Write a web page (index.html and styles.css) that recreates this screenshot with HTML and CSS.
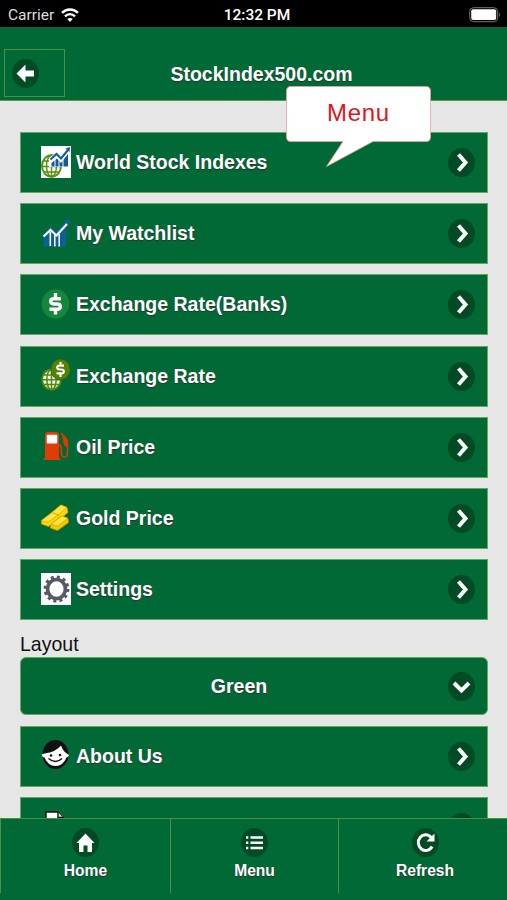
FILE: index.html
```html
<!DOCTYPE html>
<html lang="en">
<head>
    <meta charset="UTF-8">
    <meta name="viewport" content="width=device-width, initial-scale=1.0">
    <title>StockIndex500.com</title>
    <link rel="stylesheet" href="styles.css">
</head>
<body>

    <!-- Shared icons -->
    <svg class="defs" width="0" height="0">
        <symbol id="chevron" viewBox="0 0 27 29">
            <ellipse cx="13.5" cy="14.5" rx="13.5" ry="14.5" fill="#004a24"/>
            <path d="M10.5 6.5l7 8-7 8" fill="none" stroke="#fff" stroke-width="4"/>
        </symbol>
    </svg>

    <div class="status-bar">
        <div class="carrier">
            <span>Carrier</span>
            <svg width="18" height="14" viewBox="0 0 18 14" fill="none" stroke="#fff" stroke-width="2.4">
                <path d="M1 4.9c4.4-4.6 11.6-4.6 16 0"/>
                <path d="M4 8.3c2.8-2.9 7.2-2.9 10 0"/>
                <path d="M9 14L6.3 11.1c1.5-1.4 3.9-1.4 5.4 0z" fill="#fff" stroke="none"/>
            </svg>
        </div>
        <span class="clock">12:32 PM</span>
        <svg class="battery" width="32" height="16" viewBox="0 0 32 16">
            <rect x=".7" y=".7" width="28" height="14" rx="4" fill="none" stroke="#777" stroke-width="1"/>
            <rect x="2.2" y="2.3" width="25" height="10.8" rx="2" fill="#fff"/>
            <path d="M30 5.500q2 2.300 0 4.600z" fill="#777"/>
        </svg>
    </div>

    <header class="header">
        <a href="#" class="back">
            <svg width="27" height="29" viewBox="0 0 27 29">
                <ellipse cx="13.5" cy="14.5" rx="13.5" ry="14.5" fill="#004a24"/>
                <path d="M4.500 14.500L13.500 5.500V11.500H22V17.500H13.500V23.500z" fill="#fff"/>
            </svg>
        </a>
        <h1>StockIndex500.com</h1>
        <div class="callout">
            <svg width="146" height="82" viewBox="0 0 146 82">
                <path d="M5 .5H140Q144.500.5 144.500 5V51Q144.500 55.500 140 55.500H87L40.500 80.500 57 55.500H5Q.5 55.500.5 51V5Q.5.5 5 .5z" fill="#fff" stroke="#f0a0a0" stroke-width=".8"/>
            </svg>
            <span>Menu</span>
        </div>
    </header>

    <main class="content">
        <a href="#" class="item">
            <svg class="icon" viewBox="0 0 30 32">
                <path d="M0 0h30v32H0z" fill="#fff"/>
                <g fill="none" stroke="#56900f">
                    <ellipse cx="10.500" cy="20" rx="9.500" ry="10.700" stroke-width="2"/>
                    <path d="M10.500 9v22M2 15h17M1 20.500h19M3 26h15" stroke-width="1.400"/>
                    <ellipse cx="10.500" cy="20" rx="5" ry="10.700" stroke-width="1.400"/>
                </g>
                <path d="M8 12L16 6l4 4 6-7h3v18H8z" fill="#fff"/>
                <path d="M10.500 17l5.500-4.500 4 4.500 7-9v12.500H10.500z" fill="#10599a"/>
                <path d="M14 13.500v7M18 14v7M22 14v7" stroke="#fff" stroke-width="1"/>
                <path d="M9.500 13.500L15.500 8l4.500 4.500 7-8.500" fill="none" stroke="#10599a" stroke-width="2"/>
                <path d="M24.500 2.500L29 1l-.5 5z" fill="#10599a"/>
            </svg>
            <span class="label">World Stock Indexes</span>
            <svg class="arrow"><use href="#chevron"/></svg>
        </a>
        <a href="#" class="item">
            <svg class="icon" viewBox="0 0 30 32">
                <path d="M2.500 20L9.500 13 15 18 25 8v21.500H2.500z" fill="#0d5f96"/>
                <path d="M4 15L9.500 9.500 15 14.500 24 5l-1.500-1.500L28.500 2v7L26 7 15 18.500z" fill="#0d5f96"/>
                <path d="M2.500 19.500L9.500 13 15.500 18.500 26 7" fill="none" stroke="#fff" stroke-width="2.200"/>
                <path d="M9.300 15v14M13.800 18v11.500M18.200 17v12.500" stroke="#fff" stroke-width="1.500"/>
            </svg>
            <span class="label">My Watchlist</span>
            <svg class="arrow"><use href="#chevron"/></svg>
        </a>
        <a href="#" class="item">
            <svg class="icon" viewBox="0 0 30 32">
                <ellipse cx="14.500" cy="16" rx="13.700" ry="14.700" fill="#15873d"/>
                <path d="M19.800 10.700H13Q9.700 10.700 9.700 13.300T13 16H16Q19.300 16 19.300 18.700T16 21.300H8.500M14.500 5V11M14.500 21V26.500" fill="none" stroke="#fff" stroke-width="3.400"/>
            </svg>
            <span class="label">Exchange Rate(Banks)</span>
            <svg class="arrow"><use href="#chevron"/></svg>
        </a>
        <a href="#" class="item">
            <svg class="icon" viewBox="0 0 30 32">
                <ellipse cx="10.500" cy="20.500" rx="10.300" ry="11" fill="#568713"/>
                <ellipse cx="10.500" cy="20.500" rx="8.500" ry="9.300" fill="#eef6e2"/>
                <g fill="none" stroke="#568713" stroke-width="1.500">
                    <path d="M10.500 10v21M2 16h17M1 20.800h19M2 25.500h17"/>
                    <ellipse cx="10.500" cy="20.500" rx="4.700" ry="10"/>
                </g>
                <ellipse cx="19.500" cy="10.500" rx="9.700" ry="10.500" fill="#568000" stroke="#006936" stroke-width=".6"/>
                <path d="M23 6.700H18.500Q16.200 6.700 16.200 8.600T18.500 10.500H20.500Q22.800 10.500 22.800 12.500T20.500 14.400H15.500M19.500 3V7M19.500 14V18" fill="none" stroke="#fff" stroke-width="2.200"/>
            </svg>
            <span class="label">Exchange Rate</span>
            <svg class="arrow"><use href="#chevron"/></svg>
        </a>
        <a href="#" class="item">
            <svg class="icon" viewBox="0 0 30 32">
                <path d="M4 27V5Q4 2 7 2H15Q18 2 18 5V27L20 30H2L4 27.500z" fill="#e13c05"/>
                <rect x="5.700" y="4.800" width="10.600" height="8.700" rx="1" fill="#fff"/>
                <path d="M17.500 14.500q2.800.5 2.800 4v3q0 5.500 3.200 5.500t3-5.500V13q0-3-2-5.500L20 3" fill="none" stroke="#d63b08" stroke-width="1.600"/>
                <path d="M20.500 4.500L26 10v7.500q-4.500-2.500-4-7.500z" fill="#d63b08"/>
            </svg>
            <span class="label">Oil Price</span>
            <svg class="arrow"><use href="#chevron"/></svg>
        </a>
        <a href="#" class="item">
            <svg class="icon" viewBox="0 0 30 32">
                <g stroke="#d6a100" stroke-width=".7" stroke-linejoin="round">
                    <path d="M9 13L20 4l6 2.500 1 5L16 20l-8-3z" fill="#ffd60a"/>
                    <path d="M9 13L20 4l6 2.500L16 15z" fill="#ffe63d"/>
                    <path d="M.5 19.500L11 11.500l6 2.500.5 4L7.500 25.500.5 23z" fill="#ffd60a"/>
                    <path d="M.5 19.500L11 11.500l6 2.500L7 21.500z" fill="#ffe63d"/>
                    <path d="M10 23L21 15l6 2.500.5 4L16.500 29.500 9.500 27z" fill="#f7c600"/>
                    <path d="M10 23L21 15l6 2.500L16.500 25z" fill="#ffe63d"/>
                </g>
            </svg>
            <span class="label">Gold Price</span>
            <svg class="arrow"><use href="#chevron"/></svg>
        </a>
        <a href="#" class="item">
            <svg class="icon" viewBox="0 0 30 32">
                <path d="M0 0h30v32H0z" fill="#fff"/>
                <ellipse cx="15.500" cy="16" rx="11.300" ry="12" fill="none" stroke="#565966" stroke-width="3.200" stroke-dasharray="3.050 3.050"/>
                <ellipse cx="15.500" cy="16" rx="8.900" ry="9.500" fill="none" stroke="#565966" stroke-width="3.600"/>
            </svg>
            <span class="label">Settings</span>
            <svg class="arrow"><use href="#chevron"/></svg>
        </a>

        <div class="layout-label"><span>Layout</span></div>
        <div class="select">
            <span class="label">Green</span>
            <svg class="arrow" viewBox="0 0 27 29">
                <ellipse cx="13.5" cy="14.5" rx="13.5" ry="14.5" fill="#004a24"/>
                <path d="M6 11l7.500 7.500L21 11" fill="none" stroke="#fff" stroke-width="4"/>
            </svg>
        </div>

        <a href="#" class="item">
            <svg class="icon" viewBox="0 0 30 32">
                <ellipse cx="14.500" cy="15.500" rx="13" ry="14.500" fill="#111"/>
                <path d="M3.500 14.500Q15 13 20 6.500q2 6 6.500 8.500l1.500 1q-.5 2-2.500 2.500Q22 27 14.500 27T3.500 18.500Q1 18 .8 15.500z" fill="#fff"/>
                <path d="M7.500 19.500q7 6 13.500 0" fill="none" stroke="#111" stroke-width="1.400"/>
                <circle cx="10" cy="16.500" r="1.300" fill="#111"/>
                <circle cx="19" cy="16" r="1.300" fill="#111"/>
            </svg>
            <span class="label">About Us</span>
            <svg class="arrow"><use href="#chevron"/></svg>
        </a>
        <a href="#" class="item">
            <svg class="icon" viewBox="0 0 30 32">
                <path d="M5 30V2H17l5 6v22z" fill="#fff" stroke="#111" stroke-width="1.400"/>
                <path d="M17 2v5.500h5" fill="#ddd" stroke="#111" stroke-width="1.400"/>
            </svg>
            <svg class="arrow"><use href="#chevron"/></svg>
        </a>
    </main>

    <nav class="footer">
        <a href="#">
            <svg width="27" height="29" viewBox="0 0 27 29">
                <ellipse cx="13.5" cy="14.5" rx="13.5" ry="14.5" fill="#004a24"/>
                <path d="M13.500 5.500L22.500 15H20V24H15.500V17.500H11.500V24H7V15H4.500z" fill="#fff"/>
            </svg>
            <span>Home</span>
        </a>
        <a href="#">
            <svg width="27" height="29" viewBox="0 0 27 29">
                <ellipse cx="13.5" cy="14.5" rx="13.5" ry="14.5" fill="#004a24"/>
                <path d="M5 9.500h2.300M5 14.800h2.300M5 20h2.300M9.500 9.500H22M9.500 14.800H22M9.500 20H22" stroke="#fff" stroke-width="2.500"/>
            </svg>
            <span>Menu</span>
        </a>
        <a href="#">
            <svg width="27" height="29" viewBox="0 0 27 29">
                <ellipse cx="13.5" cy="14.5" rx="13.5" ry="14.5" fill="#004a24"/>
                <path d="M19.200 9.500A7.300 7.900 0 1 0 20 18.500" fill="none" stroke="#fff" stroke-width="3"/>
                <path d="M22.500 5.500V13.500H14.500z" fill="#fff"/>
            </svg>
            <span>Refresh</span>
        </a>
    </nav>

</body>
</html>
```
FILE: styles.css
```css
body {
    margin: 0;
    height: 900px;
    overflow: hidden;
    display: flex;
    flex-direction: column;
    background-color: #e6e6e6;
    font-family: "Liberation Sans", Arial, sans-serif;
}

a {
    color: #fff;
    text-decoration: none;
}

svg {
    display: block;
}

.defs {
    position: absolute;
}

/* Status bar */
.status-bar {
    flex: none;
    height: 27px;
    display: grid;
    grid-template-columns: 1fr auto 1fr;
    align-items: center;
    padding: 2px 6px 0 13px;
    box-sizing: border-box;
    background: #000;
    color: #fff;
    font-family: Roboto, "Liberation Sans", sans-serif;
    font-size: 15.5px;
}

.carrier {
    display: flex;
    align-items: center;
    gap: 7px;
    margin-left: -5px;
    color: #ddd;
}

.clock {
    font-weight: 500;
}

.battery {
    justify-self: end;
}

/* Header */
.header {
    flex: none;
    position: relative;
    z-index: 1;
    height: 74px;
    box-sizing: border-box;
    padding-top: 22px;
    display: grid;
    grid-template-columns: 69px 1fr 53px;
    background: #006936;
    border-bottom: 1px solid #569a4c;
}

.back {
    width: 61px;
    height: 48px;
    margin-left: 4px;
    padding-left: 7px;
    box-sizing: border-box;
    display: flex;
    align-items: center;
    border: 1px solid #4b9144;
}

.header h1 {
    margin: 0;
    font-size: 19.5px;
    line-height: 50px;
    text-align: center;
    color: #fff;
    text-shadow: 0 1px 1px #303030;
    transform: scaleY(1.06);
}

/* Callout bubble */
.callout {
    position: absolute;
    left: 286px;
    top: 59px;
    width: 146px;
}

.callout span {
    position: absolute;
    top: 0;
    left: 0;
    width: 145px;
    line-height: 54px;
    text-align: center;
    font-size: 24px;
    letter-spacing: .7px;
    color: #e0141c;
}

/* Menu list */
.content {
    flex: 1;
    min-height: 0;
    overflow: hidden;
    padding: 31px 19px 0 20px;
    display: flex;
    flex-direction: column;
    gap: 10.2px;
}

.item {
    flex: none;
    height: 61px;
    box-sizing: border-box;
    padding: 0 12px 0 20px;
    display: flex;
    align-items: center;
    background: #006936;
    border: 1px solid #67a85b;
}

.icon {
    width: 30px;
    height: 32px;
    margin-right: 5px;
    margin-bottom: 2px;
}

.label {
    font-size: 19.5px;
    font-weight: bold;
    color: #fff;
    text-shadow: 0 1px 1px #303030;
    transform: scaleY(1.06);
}

.arrow {
    width: 27px;
    height: 29px;
    margin-left: auto;
}

.layout-label {
    flex: none;
    height: 27px;
    margin-bottom: -10.2px;
    line-height: 29px;
    font-size: 19.5px;
    color: #111;
}

.layout-label span {
    display: inline-block;
    transform: scaleY(1.06);
}

.select {
    flex: none;
    height: 58px;
    box-sizing: border-box;
    padding: 0 12px 0 9px;
    display: grid;
    grid-template-columns: 1fr 27px;
    align-items: center;
    text-align: center;
    background: #006936;
    border: 1px solid #67a85b;
    border-radius: 6px;
}

/* Bottom bar */
.footer {
    flex: none;
    height: 82px;
    box-sizing: border-box;
    display: grid;
    grid-template-columns: 170px 168px 1fr;
    background: #006936;
    border-top: 1px solid #4b9144;
}

.footer a {
    height: 74px;
    display: flex;
    flex-direction: column;
    align-items: center;
    padding-top: 9px;
    box-sizing: border-box;
    border-left: 1px solid #4b9144;
}

.footer a:last-child {
    padding-left: 4px;
}

.footer span {
    margin-top: 5px;
    font-size: 15.6px;
    font-weight: bold;
    text-shadow: 0 1px 1px #303030;
    transform: scaleY(1.06);
}
```
